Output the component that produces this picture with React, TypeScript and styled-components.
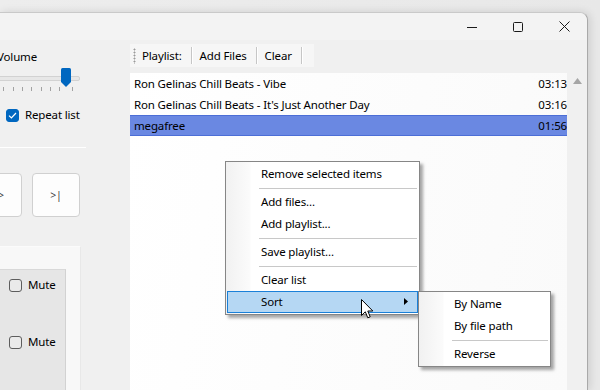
import React from 'react'
import styled, { createGlobalStyle, css } from 'styled-components'

const GlobalStyle = createGlobalStyle`
	html, body {
		margin: 0;
		padding: 0;
		background: #e9e9e9;
	}

	body {
		font-family: 'Noto Sans', 'Open Sans', sans-serif;
		font-size: 11.5px;
		letter-spacing: -0.15px;
		color: #000;
	}
`

const Desktop = styled.div`
	position: relative;

	width: 600px;
	height: 390px;
	padding-top: 12px;
	box-sizing: border-box;
	overflow: hidden;

	background: linear-gradient(90deg, #ededed 0%, #e8e8e8 100%);
`

const Window = styled.div`
	width: 588px;
	height: 378px;
	box-sizing: border-box;

	border-top: 1px solid #c9c9c9;
	border-right: 1px solid #a9a9a9;
	border-top-right-radius: 8px;

	display: flex;
	flex-direction: column;

	background-color: #f0f0f0;
	box-shadow: 2px 0 8px rgba(0, 0, 0, 0.12);
`

const TitleBar = styled.div`
	height: 27px;

	display: flex;
	justify-content: flex-end;

	background-color: #f3f3f3;
	border-top-right-radius: 8px;
`

const CaptionButton = styled.div`
	width: 46px;
	height: 27px;

	display: flex;
	justify-content: center;
	align-items: center;
`

const Body = styled.div`
	flex: 1;
	min-height: 0;

	display: flex;
`

const LeftPanel = styled.div`
	width: 130px;
	flex-shrink: 0;
	overflow: hidden;

	display: flex;
	flex-direction: column;
`

const Label = styled.div`
	margin: 9px 0 0 -3px;

	line-height: 16px;
	white-space: nowrap;
`

const Slider = styled.div`
	position: relative;

	width: 80px;
	height: 26px;
	margin-top: 3px;
`

const SliderTrack = styled.div`
	position: absolute;
	top: 8px;
	left: -4px;

	width: 82px;
	height: 3px;

	border: 1px solid #d2d2d2;
	border-radius: 2px;
	background-color: #e7e7e7;
`

const SliderThumb = styled.svg`
	position: absolute;
	top: 0;
`

const Tick = styled.div`
	position: absolute;
	top: 19px;

	width: 1px;
	height: 4px;

	background-color: #a2a2a2;
`

const CheckRow = styled.label<{ top: number, left: number }>`
	margin-top: ${props => props.top}px;
	margin-left: ${props => props.left}px;

	display: flex;
	align-items: center;
	gap: 6px;

	line-height: 14px;
	white-space: nowrap;
`

const Check = styled.span<{ checked?: boolean }>`
	width: 13px;
	height: 13px;
	box-sizing: border-box;

	border-radius: 3px;

	display: flex;
	justify-content: center;
	align-items: center;

	${props => props.checked
		? css`
			background-color: #0067c0;
			border: 1px solid #0067c0;
		`
		: css`
			background-color: #eaeaea;
			border: 1px solid #5d5d5d;
		`}
`

const GroupLine = styled.div`
	width: 86px;
	height: 1px;
	margin-top: 25px;

	background-color: #ffffff;
`

const Transport = styled.div`
	margin: 25px 0 0 -26px;

	display: flex;
	gap: 10px;
`

const TransportButton = styled.div`
	width: 48px;
	height: 44px;
	flex-shrink: 0;
	box-sizing: border-box;

	border: 1px solid #d0d0d0;
	border-radius: 4px;

	display: flex;
	justify-content: center;
	align-items: center;

	background-color: #fdfdfd;
	font-size: 10.5px;
	color: #3a3a3a;
`

const MixerBox = styled.div`
	flex: 1;
	width: 81px;
	margin-top: 29px;
	box-sizing: border-box;

	border-top: 1px solid #fbfbfb;
	border-right: 1px solid #e8e8e8;

	padding-top: 22px;

	background-color: #f8f8f8;
`

const MixerChannels = styled.div`
	width: 66px;
	height: 100%;
	box-sizing: border-box;

	border-top: 1px solid #d9d9d9;
	border-right: 1px solid #d2d2d2;

	display: flex;
	flex-direction: column;

	background-color: #e6e6e6;
`

const RightPane = styled.div`
	width: 437px;
	flex-shrink: 0;

	display: flex;
	flex-direction: column;
`

const Toolbar = styled.div`
	align-self: flex-start;
	height: 23px;
	margin-top: 4px;
	padding-right: 4px;

	display: flex;
	align-items: center;

	background-color: #f6f6f6;
`

const Grip = styled.div`
	width: 3px;
	height: 16px;
	flex-shrink: 0;
	margin: 0 6px 0 3px;

	background-image: radial-gradient(circle, #9a9a9a 0.9px, transparent 1.1px);
	background-size: 3px 3px;
`

const ToolItem = styled.div`
	flex-shrink: 0;
	padding-right: 9px;

	white-space: nowrap;
`

const ToolSeparator = styled.div`
	width: 1px;
	height: 17px;
	flex-shrink: 0;
	margin-right: 8px;

	background-color: #c6c6c6;
	box-shadow: 1px 0 0 #ffffff;
`

const List = styled.div`
	flex: 1;
	margin-top: 6px;

	background: linear-gradient(100deg, #ffffff 0%, #fafafa 100%);
`

const Row = styled.div<{ selected?: boolean }>`
	height: 21px;
	padding-left: 4px;
	box-sizing: border-box;

	display: flex;
	justify-content: space-between;
	align-items: center;

	white-space: nowrap;

	${props => props.selected && css`
		background-color: #6a88e2;
		border-top: 1px solid #4c6ed6;
		border-bottom: 1px solid #4c6ed6;
	`}
`

const ScrollBar = styled.div`
	flex: 1;

	display: flex;
	justify-content: center;
	align-items: flex-start;
	padding-top: 38px;
`

const Menu = styled.div<{ left: number, top: number, width: number }>`
	position: absolute;
	left: ${props => props.left}px;
	top: ${props => props.top}px;

	width: ${props => props.width}px;
	padding: 1px;
	box-sizing: border-box;

	border: 1px solid #868686;

	background: linear-gradient(90deg, #f1f1f1 0px, #fbfbfb 24px, #ffffff 25px);
	box-shadow: 3px 3px 3px rgba(0, 0, 0, 0.35);
`

const MenuItem = styled.div<{ active?: boolean }>`
	height: 22px;
	padding: 0 10px 1px 34px;
	box-sizing: border-box;

	display: flex;
	align-items: center;
	justify-content: space-between;

	white-space: nowrap;

	${props => props.active && css`
		padding: 0 9px 1px 33px;

		border: 1px solid #1a80d8;
		background-color: #b5d7f3;
	`}
`

const MenuSeparator = styled.div`
	height: 1px;
	margin: 3px 1px 2px 32px;

	background-color: #c8c8c8;
`

const Cursor = styled.svg`
	position: absolute;
	left: 361px;
	top: 299px;
`

const ticks = [3, 13, 22, 31, 41, 50, 59, 72]

const tracks = [
	{ title: 'Ron Gelinas Chill Beats - Vibe', time: '03:13' },
	{ title: "Ron Gelinas Chill Beats - It's Just Another Day", time: '03:16' },
	{ title: 'megafree', time: '01:56', selected: true },
]

const CheckMark = () => (
	<svg width="9" height="7" viewBox="0 0 9 7">
		<path d="M1 3.6 L3.4 6 L8 1" fill="none" stroke="#ffffff" strokeWidth="1.2" />
	</svg>
)

const App: React.FC = () => {
	const volume = 0.8

	return (
		<>
			<GlobalStyle />
			<Desktop>
				<Window>
					<TitleBar>
						<CaptionButton>
							<svg width="10" height="10" viewBox="0 0 10 10">
								<path d="M0 5.5 H10" stroke="#1a1a1a" strokeWidth="1" />
							</svg>
						</CaptionButton>
						<CaptionButton>
							<svg width="10" height="10" viewBox="0 0 10 10">
								<rect x="0.5" y="0.5" width="9" height="9" rx="1" fill="none" stroke="#1a1a1a" strokeWidth="1" />
							</svg>
						</CaptionButton>
						<CaptionButton>
							<svg width="11" height="11" viewBox="0 0 11 11">
								<path d="M0.5 0.5 L10.5 10.5 M10.5 0.5 L0.5 10.5" stroke="#1a1a1a" strokeWidth="1" />
							</svg>
						</CaptionButton>
					</TitleBar>
					<Body>
						<LeftPanel>
							<Label>Volume</Label>
							<Slider>
								<SliderTrack />
								{ticks.map(x => <Tick key={x} style={{ left: x }} />)}
								<SliderThumb width="10" height="19" viewBox="0 0 10 19" style={{ left: volume * 76 }}>
									<path d="M1.5 0 H8.5 Q10 0 10 1.5 V14 L5 19 L0 14 V1.5 Q0 0 1.5 0 Z" fill="#0067c0" />
								</SliderThumb>
							</Slider>
							<CheckRow top={14} left={6}>
								<Check checked><CheckMark /></Check>
								Repeat list
							</CheckRow>
							<GroupLine />
							<Transport>
								<TransportButton>&gt;&gt;</TransportButton>
								<TransportButton>&gt;|</TransportButton>
							</Transport>
							<MixerBox>
								<MixerChannels>
									<CheckRow top={8} left={9}>
										<Check />
										Mute
									</CheckRow>
									<CheckRow top={43} left={9}>
										<Check />
										Mute
									</CheckRow>
								</MixerChannels>
							</MixerBox>
						</LeftPanel>
						<RightPane>
							<Toolbar>
								<Grip />
								<ToolItem>Playlist:</ToolItem>
								<ToolSeparator />
								<ToolItem>Add Files</ToolItem>
								<ToolSeparator />
								<ToolItem>Clear</ToolItem>
								<ToolSeparator />
							</Toolbar>
							<List>
								{tracks.map(t => (
									<Row key={t.title} selected={t.selected}>
										<span>{t.title}</span>
										<span>{t.time}</span>
									</Row>
								))}
							</List>
						</RightPane>
						<ScrollBar>
							<svg width="9" height="6" viewBox="0 0 9 6">
								<path d="M4.5 0 L9 6 H0 Z" fill="#a5a5a5" />
							</svg>
						</ScrollBar>
					</Body>
				</Window>

				<Menu left={225} top={161} width={195}>
					<MenuItem>Remove selected items</MenuItem>
					<MenuSeparator />
					<MenuItem>Add files...</MenuItem>
					<MenuItem>Add playlist...</MenuItem>
					<MenuSeparator />
					<MenuItem>Save playlist...</MenuItem>
					<MenuSeparator />
					<MenuItem>Clear list</MenuItem>
					<MenuItem active>
						Sort
						<svg width="4" height="7" viewBox="0 0 4 7">
							<path d="M0 0 L4 3.5 L0 7 Z" fill="#000" />
						</svg>
					</MenuItem>
				</Menu>

				<Menu left={418} top={291} width={133}>
					<MenuItem>By Name</MenuItem>
					<MenuItem>By file path</MenuItem>
					<MenuSeparator />
					<MenuItem>Reverse</MenuItem>
				</Menu>

				<Cursor width="13" height="20" viewBox="0 0 13 20">
					<path d="M0.5 0.5 V16.5 L4.3 12.8 L6.8 18.8 L9.2 17.8 L6.8 12 H11.8 Z" fill="#ffffff" stroke="#000000" strokeWidth="1" strokeLinejoin="round" />
				</Cursor>
			</Desktop>
		</>
	)
}

export default App
